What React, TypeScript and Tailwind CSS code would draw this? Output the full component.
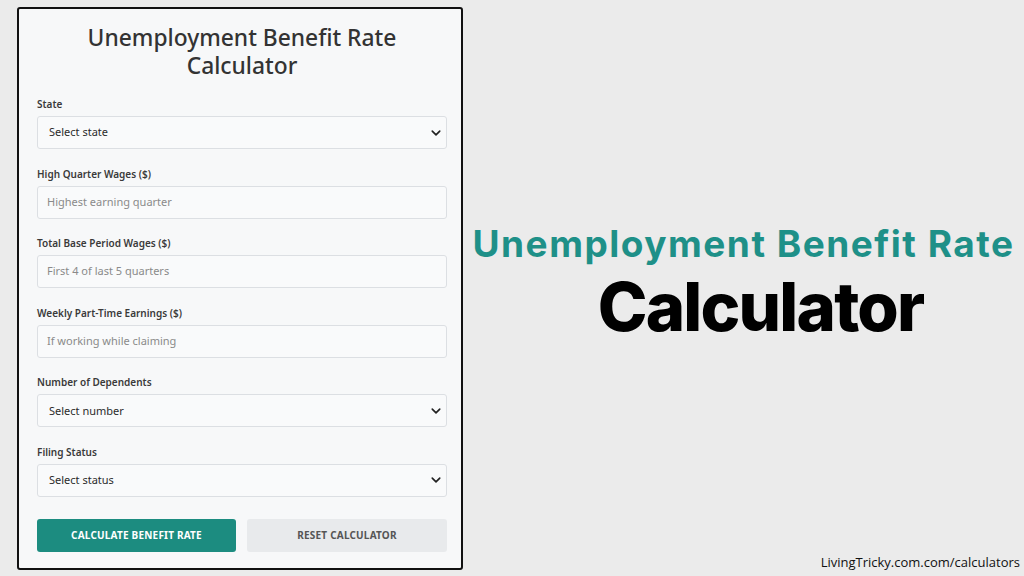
import React from "react";

const Chevron = () => (
  <svg width="10" height="10" viewBox="0 0 16 16" className="shrink-0">
    <path d="M2 5l6 6 6-6" fill="none" stroke="#222" strokeWidth="2.6" strokeLinecap="round" strokeLinejoin="round" />
  </svg>
);

function Field({ label, children }: { label: string; children: React.ReactNode }) {
  return (
    <div className="flex flex-col">
      <div className="h-[12px] leading-[12px] text-[10px] font-semibold text-[#3a3a3a] mb-[6px]">{label}</div>
      {children}
    </div>
  );
}

function SelectBox({ text }: { text: string }) {
  return (
    <div className="h-[33px] rounded-[3px] border border-[#dcdfe3] bg-[#f9fafb] flex items-center justify-between pl-[11px] pr-[5px]">
      <span className="text-[11px] text-[#2b2b2b]">{text}</span>
      <Chevron />
    </div>
  );
}

function InputBox({ text }: { text: string }) {
  return (
    <div className="h-[33px] rounded-[3px] border border-[#dcdfe3] bg-[#f9fafb] flex items-center pl-[9px]">
      <span className="text-[11px] text-[#8a8a8a]">{text}</span>
    </div>
  );
}

export default function App() {
  return (
    <div
      className="w-[1024px] h-[576px] bg-[#ebebeb] flex relative overflow-hidden"
      style={{ fontFamily: '"Noto Sans", "Open Sans", sans-serif' }}
    >
      <div className="ml-[17px] mt-[7px] w-[446px] h-[563px] border-2 border-[#111] rounded-[3px] bg-[#f7f8f9] pl-[18px] pr-[14px] pt-[15px] flex flex-col">
        <h1 className="text-center text-[22.8px] leading-[28px] text-[#333] font-medium">
          Unemployment Benefit Rate
          <br />
          Calculator
        </h1>
        <div className="mt-[18px] flex flex-col gap-[18.6px]">
          <Field label="State">
            <SelectBox text="Select state" />
          </Field>
          <Field label="High Quarter Wages ($)">
            <InputBox text="Highest earning quarter" />
          </Field>
          <Field label="Total Base Period Wages ($)">
            <InputBox text="First 4 of last 5 quarters" />
          </Field>
          <Field label="Weekly Part-Time Earnings ($)">
            <InputBox text="If working while claiming" />
          </Field>
          <Field label="Number of Dependents">
            <SelectBox text="Select number" />
          </Field>
          <Field label="Filing Status">
            <SelectBox text="Select status" />
          </Field>
        </div>
        <div className="mt-[22px] flex gap-[11px]">
          <div className="w-[199px] h-[33px] rounded-[3px] bg-[#1c8c80] flex items-center justify-center text-white text-[10px] font-bold tracking-[0.2px]">
            CALCULATE BENEFIT RATE
          </div>
          <div className="flex-1 h-[33px] rounded-[3px] bg-[#e8eaec] flex items-center justify-center text-[#555] text-[10px] font-bold tracking-[0.2px]">
            RESET CALCULATOR
          </div>
        </div>
      </div>

      <div className="flex-1 flex flex-col items-center pt-[220px]" style={{ fontFamily: 'Inter, "DejaVu Sans", sans-serif' }}>
        <div className="text-[37px] leading-[48px] font-bold text-[#1e9088] tracking-[1.5px]">
          Unemployment Benefit Rate
        </div>
        <div className="mt-[1px] pl-[34px] text-[67px] leading-[76px] font-extrabold text-black tracking-[-1.8px]">
          Calculator
        </div>
      </div>

      <div
        className="absolute right-[4px] bottom-[4px] text-[13px] text-[#111]"
        style={{ fontFamily: '"Open Sans", sans-serif' }}
      >
        LivingTricky.com.com/calculators
      </div>
    </div>
  );
}
